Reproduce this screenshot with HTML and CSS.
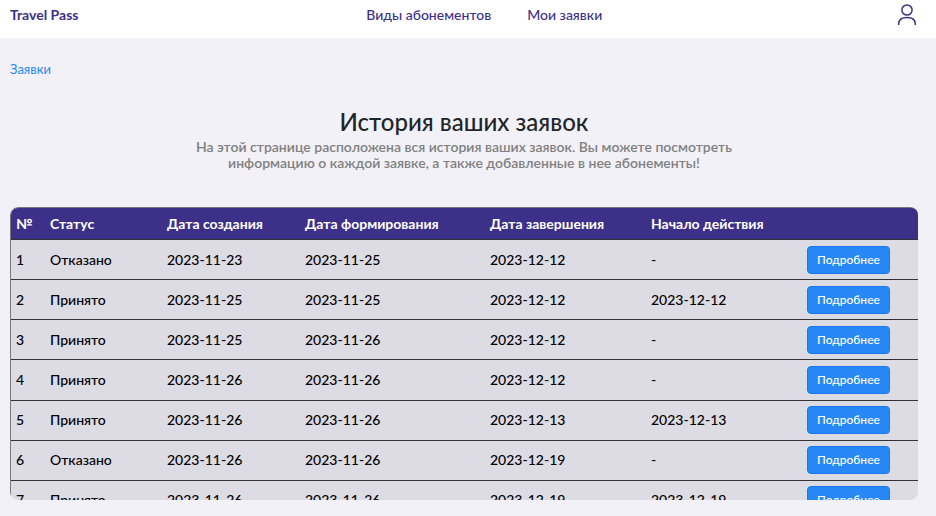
FILE: index.html
```html
<!DOCTYPE html>
<html lang="ru">
<head>
<meta charset="utf-8">
<title>Travel Pass</title>
<link rel="stylesheet" href="styles.css">
</head>
<body>
<header class="header">
  <a class="brand" href="#">Travel Pass</a>
  <nav class="nav">
    <a href="#">Виды абонементов</a>
    <a href="#">Мои заявки</a>
  </nav>
  <a class="profile" href="#" aria-label="Профиль">
    <svg viewBox="0 0 20 22" width="20" height="22" fill="none" stroke="currentColor" stroke-width="1.5">
      <circle cx="10" cy="6" r="5.1"/>
      <path d="M1.7 21V20C1.7 15.6 5.2 13.6 10 13.6S18.3 15.6 18.3 20V21"/>
    </svg>
  </a>
</header>
<main class="page">
  <nav class="breadcrumbs"><a href="#">Заявки</a></nav>
  <div class="intro">
    <h1>История ваших заявок</h1>
    <p>На этой странице расположена вся история ваших заявок. Вы можете посмотреть информацию о каждой заявке, а также добавленные в нее абонементы!</p>
  </div>
  <div class="table-wrap">
    <table class="orders">
      <colgroup>
        <col class="c-num"><col class="c-status"><col class="c-created"><col class="c-formed"><col class="c-finished"><col class="c-start"><col class="c-action">
      </colgroup>
      <thead>
        <tr><th>№</th><th>Статус</th><th>Дата создания</th><th>Дата формирования</th><th>Дата завершения</th><th>Начало действия</th><th></th></tr>
      </thead>
      <tbody>
        <tr><td>1</td><td>Отказано</td><td>2023-11-23</td><td>2023-11-25</td><td>2023-12-12</td><td>-</td><td><button type="button">Подробнее</button></td></tr>
        <tr><td>2</td><td>Принято</td><td>2023-11-25</td><td>2023-11-25</td><td>2023-12-12</td><td>2023-12-12</td><td><button type="button">Подробнее</button></td></tr>
        <tr><td>3</td><td>Принято</td><td>2023-11-25</td><td>2023-11-26</td><td>2023-12-12</td><td>-</td><td><button type="button">Подробнее</button></td></tr>
        <tr><td>4</td><td>Принято</td><td>2023-11-26</td><td>2023-11-26</td><td>2023-12-12</td><td>-</td><td><button type="button">Подробнее</button></td></tr>
        <tr><td>5</td><td>Принято</td><td>2023-11-26</td><td>2023-11-26</td><td>2023-12-13</td><td>2023-12-13</td><td><button type="button">Подробнее</button></td></tr>
        <tr><td>6</td><td>Отказано</td><td>2023-11-26</td><td>2023-11-26</td><td>2023-12-19</td><td>-</td><td><button type="button">Подробнее</button></td></tr>
        <tr><td>7</td><td>Принято</td><td>2023-11-26</td><td>2023-11-26</td><td>2023-12-19</td><td>2023-12-19</td><td><button type="button">Подробнее</button></td></tr>
      </tbody>
    </table>
  </div>
</main>
</body>
</html>
```

FILE: styles.css
```css
* { box-sizing: border-box; }

body {
  display: flex;
  flex-direction: column;
  height: 100vh;
  margin: 0;
  overflow: hidden;
  background: #f2f1f7;
  color: #212529;
  font: 500 14px/16px Lato, "Noto Sans", sans-serif;
}

a { color: inherit; text-decoration: none; }

.header {
  display: flex;
  align-items: center;
  justify-content: space-between;
  height: 38px;
  padding: 0 19px 8px 10px;
  background: #fff;
  color: #3d3089;
}

.brand { font-weight: 700; }

.nav { display: flex; gap: 36px; }

.profile { display: flex; padding-left: 7px; }

.page {
  display: flex;
  flex: 1;
  flex-direction: column;
  min-height: 0;
  padding: 23px 18px 16px 10px;
}

.breadcrumbs { color: #2787f5; font-size: 13px; font-weight: 400; }

.intro {
  max-width: 560px;
  margin: 31px auto 36px;
  text-align: center;
}

.intro h1 {
  margin: 0 0 3px;
  font-size: 24px;
  font-weight: 500;
  line-height: 28px;
}

.intro p { margin: 0; color: #808080; font-weight: 600; }

.table-wrap {
  flex: 1;
  min-height: 0;
  overflow: hidden;
  border-radius: 8px;
}

.orders {
  width: 100%;
  height: 315px;
  table-layout: fixed;
  border: 1px solid #77757d;
  border-radius: 8px;
  border-spacing: 0;
  overflow: hidden;
  background: #dddbe4;
  color: #000;
}

.c-num { width: 34px; }
.c-status, .c-action { width: 117px; }
.c-created { width: 138px; }
.c-formed { width: 185px; }
.c-finished { width: 161px; }
.c-start { width: 156px; }

.orders th,
.orders td {
  padding: 0 5px;
  border-bottom: 1px solid #333;
  text-align: left;
}

.orders th {
  height: 32px;
  background: #3d3089;
  color: #fff;
  font-weight: 700;
}

.orders td { height: 40px; }

.orders button {
  display: block;
  height: 28px;
  padding: 0 9px;
  border: 1px solid #1b76f2;
  border-radius: 4px;
  background: #2787f5;
  color: #fff;
  font: inherit;
  font-size: 12px;
}
```
